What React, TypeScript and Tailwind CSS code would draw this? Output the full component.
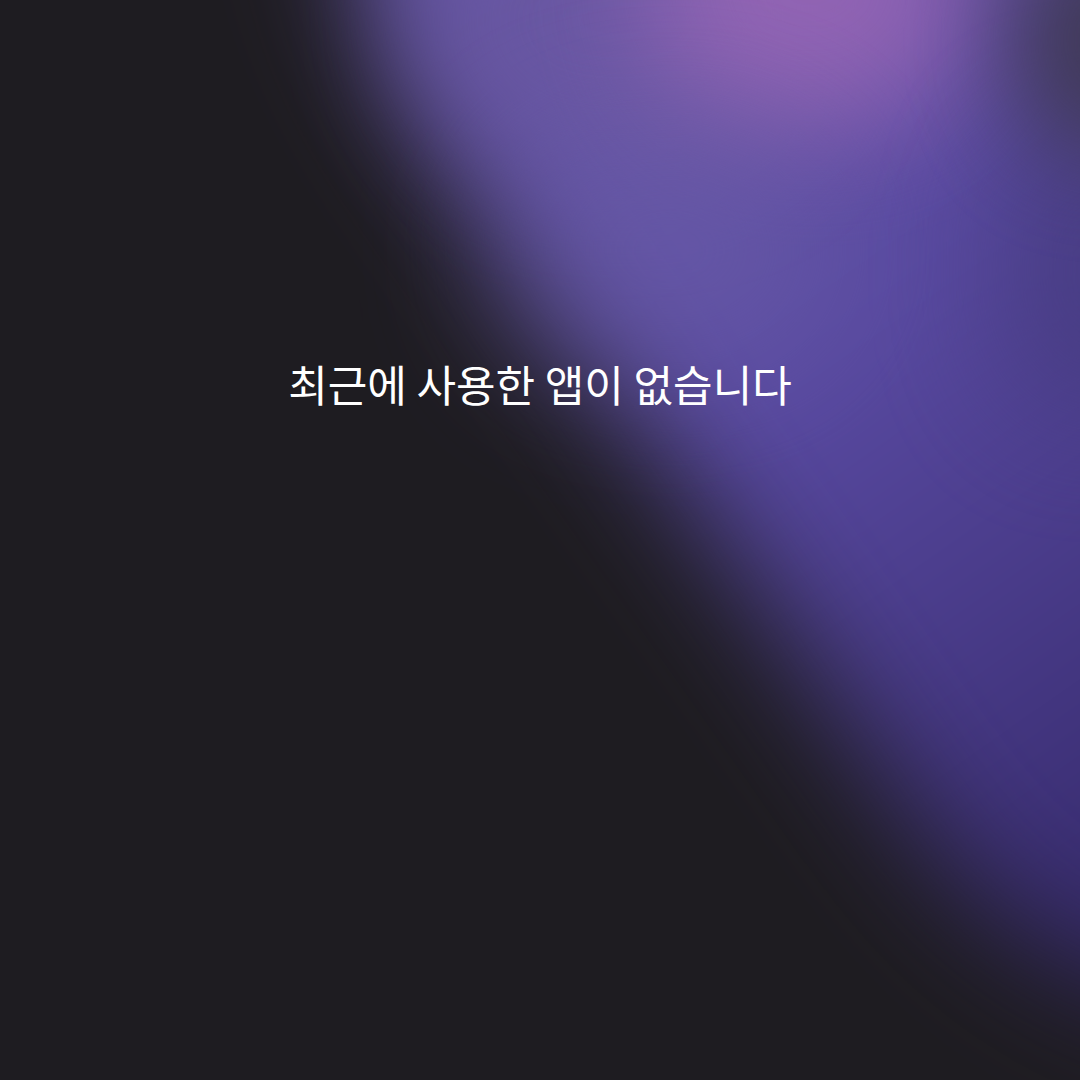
export default function App() {
  return (
    <div className="relative h-[1080px] w-[1080px] overflow-hidden bg-[#1e1c21]">
      {/* blurred wallpaper band */}
      <div className="absolute left-[170px] top-[-230px] h-[900px] w-[1750px] rotate-[55deg] rounded-full bg-linear-to-r from-[#6a5ca8] via-[#5849a0] to-[#2a1f5a] blur-[60px]" />
      <div className="absolute left-[410px] top-[-140px] h-[320px] w-[420px] rounded-full bg-[#6a58a2] opacity-80 blur-[60px]" />
      <div className="absolute left-[640px] top-[-150px] h-[280px] w-[340px] rounded-full bg-[#9c68b8] opacity-80 blur-[60px]" />
      <div className="absolute left-[500px] top-[130px] h-[240px] w-[340px] rounded-full bg-[#6a5ca8] opacity-60 blur-[70px]" />
      <div className="absolute left-[1000px] top-[120px] h-[300px] w-[200px] rounded-full bg-[#443a7c] opacity-70 blur-[60px]" />
      <div className="absolute left-[1010px] top-[-80px] h-[240px] w-[200px] rounded-full bg-[#3e3850] opacity-90 blur-[50px]" />

      <div className="relative flex justify-center pt-[357px]">
        <p className="text-[43px] leading-[52px] text-white [font-family:'Noto_Sans_CJK_KR','Noto_Sans',sans-serif]">
          최근에 사용한 앱이 없습니다
        </p>
      </div>
    </div>
  );
}
